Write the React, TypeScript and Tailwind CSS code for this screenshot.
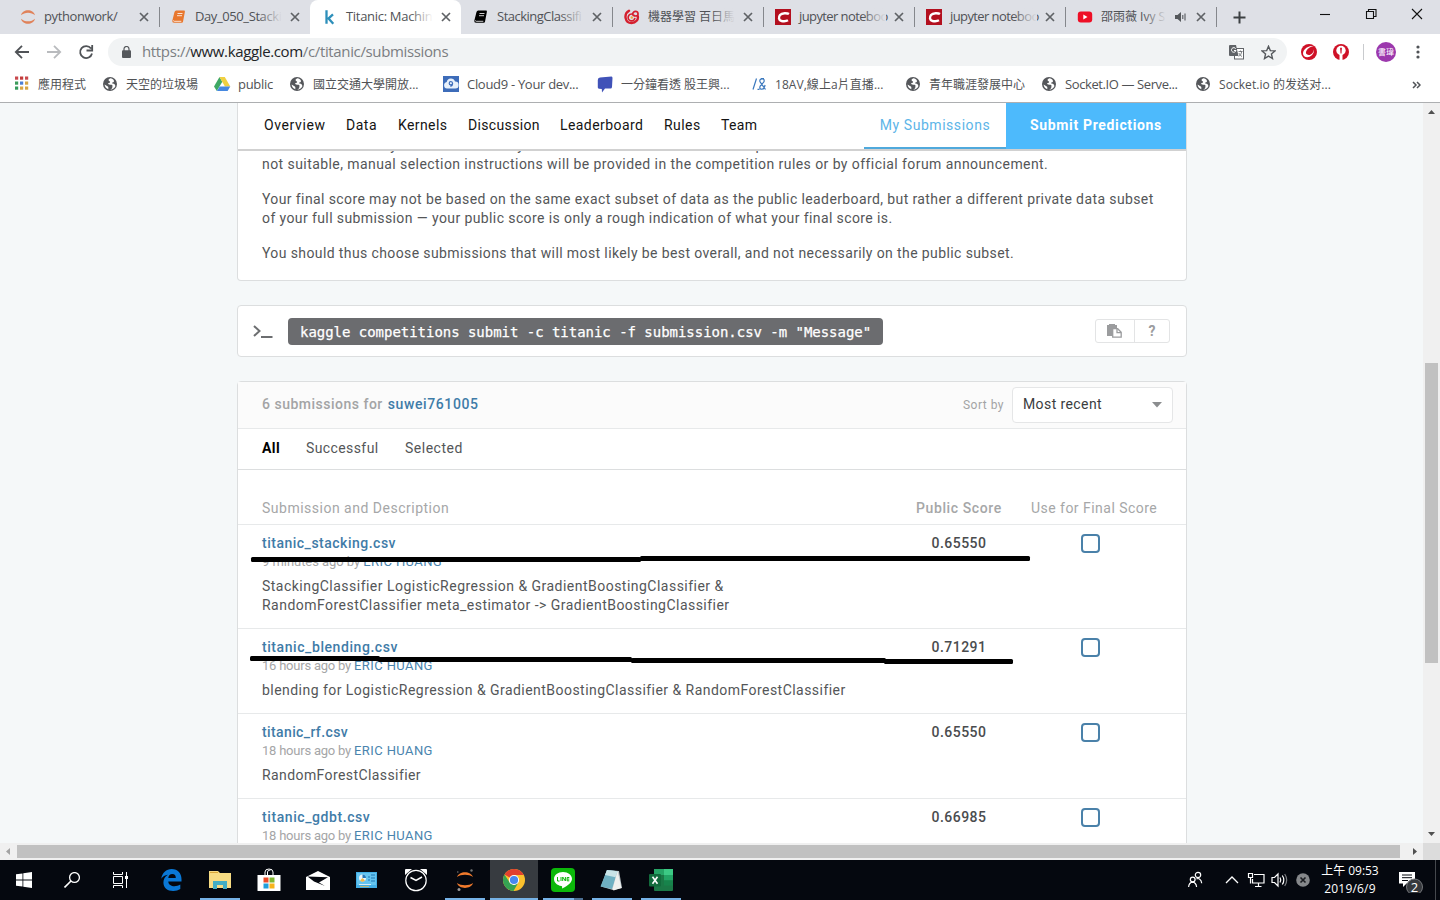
import React from "react";

const ui = "font-['Open_Sans','Noto_Sans_CJK_TC',sans-serif]";

/* ---------- small icons ---------- */

const Jupyter = ({ size = 16 }: { size?: number }) => (
  <svg width={size} height={size} viewBox="0 0 16 16" fill="none">
    <path d="M1 6.2C2.6 -0.4 13.400 -0.4 15 6.2C11.500 2.800 4.500 2.800 1 6.200Z" fill="#e0825a" />
    <path d="M1 9.800C2.600 16.400 13.400 16.400 15 9.800C11.500 13.200 4.500 13.200 1 9.800Z" fill="#e0825a" />
  </svg>
);

const Book = ({ color, line = "#fff" }: { color: string; line?: string }) => (
  <svg width="16" height="16" viewBox="0 0 16 16">
    <path d="M5.200 1.500H13q1.200 0 .9 1.200L12 12.700q-.2 1-1.200 1H3q-2 0-1.700-2L3.500 3q.4-1.500 1.700-1.500Z" fill={color} />
    <path d="M6.500 4.500h5M6 6.700h5" stroke={line} strokeWidth=".8" />
    <path d="M2.500 11.500q0 .8.8.8h7" stroke={line} strokeWidth=".8" fill="none" />
  </svg>
);

const Kaggle = () => (
  <svg width="16" height="16" viewBox="0 0 16 16" fill="none" stroke="#2d8fba" strokeWidth="2.300">
    <path d="M4.500 1.200V14.800M11 5.300L5.800 10.200M6.300 9.200L11.300 14.800" />
  </svg>
);

const Cupoy = () => (
  <svg width="16" height="16" viewBox="0 0 16 16" fill="none" stroke="#d5202f" strokeLinecap="round">
    <path d="M5 1.800C-.6 5 .8 14 7.500 14c4.500 0 7-3.500 6.300-6.800" strokeWidth="2.400" />
    <path d="M10.800 9.500A3.400 3.400 0 1 1 8.500 5.200C9.500 1.500 13.500 1.500 14 4.500S11 7.500 9 6" strokeWidth="1.700" />
    <circle cx="7.800" cy="8.500" r="1.200" fill="#f4a640" stroke="none" />
  </svg>
);

const CsdnC = () => (
  <svg width="16" height="16" viewBox="0 0 16 16">
    <rect width="16" height="16" fill="#b3101f" />
    <path d="M14 5C12.500 4 7 3.500 5 6C3.400 8 3.500 11.500 6.500 12c2.500.4 5 .2 6.500-.7" fill="none" stroke="#fff" strokeWidth="2.400" />
  </svg>
);

const YouTube = () => (
  <svg width="16" height="16" viewBox="0 0 16 16">
    <rect x=".8" y="2.500" width="14.400" height="11" rx="3" fill="#ee0f26" />
    <path d="M6.300 5.500v5l4.200-2.500z" fill="#fff" />
  </svg>
);

const Close = () => (
  <svg width="10" height="10" viewBox="0 0 10 10" stroke="#5f6266" strokeWidth="1.700">
    <path d="M1 1l8 8M9 1L1 9" />
  </svg>
);

const Globe = () => (
  <svg width="16" height="16" viewBox="0 0 16 16">
    <circle cx="7" cy="8" r="7" fill="#55575b" />
    <path d="M7.800 2.200C5 3 5.200 4.500 6.500 5.200C8 6 6.500 7 5.200 7.300C4.300 7.600 5.400 8.800 8 8.700c2 0 1.500 1.600 1.300 2.800c-.2 1-1 1.700-2 2.200c2.500.1 4.300-1.600 5.100-3.400c-.3-1.800-1.100-2.600-2.700-2.700c-1.400 0-.6-1.200.5-1.300c1-.1 1-1.700 0-2.700C9.500 2.900 8.700 2.300 7.800 2.200Z" fill="#fff" />
    <path d="M1.600 8.500l3.200 2c1 .6.300 1.500.600 2.800c-2.200-.7-3.700-2.500-3.800-4.800Z" fill="#fff" />
  </svg>
);

const Apps = () => (
  <svg width="16" height="16" viewBox="0 0 16 16">
    {["#c8484c", "#c33d3c", "#c8484c", "#3c9b5b", "#4b7fd6", "#d6a545", "#349a5a", "#d9a545", "#d6a545"].map((c, i) => (
      <rect key={i} x={(i % 3) * 5} y={0.5 + Math.floor(i / 3) * 5} width="3.200" height="3.200" fill={c} />
    ))}
  </svg>
);

const Drive = () => (
  <svg width="17" height="16" viewBox="0 0 17 16">
    <path d="M5.500 1L0 10.500L2.800 15L8.300 5.700Z" fill="#3fa864" />
    <path d="M5.500 1h5.300l5.500 9.500h-5.400Z" fill="#f0d040" />
    <path d="M5.700 10.500h10.600L13.600 15H2.900Z" fill="#4688e0" />
  </svg>
);

const Cloud9 = () => (
  <svg width="16" height="16" viewBox="0 0 16 16">
    <rect width="16" height="16" fill="#3d6cb9" />
    <path d="M4 12.500a3.300 3.300 0 0 1-.3-6.500a4.300 4.300 0 0 1 8.300-.4a3.400 3.400 0 0 1 .3 6.900Z" fill="#e8f1fb" />
    <path d="M9.600 7.300a1.700 1.700 0 1 1-1.700-1.800q1.700.1 1.700 2.200t-2.200 2.700" fill="none" stroke="#3d6cb9" strokeWidth="1.200" />
  </svg>
);

const Chat = () => (
  <svg width="16" height="17" viewBox="0 0 16 17">
    <path d="M3 1.500L14.500 0.500Q15.500.500 15.500 2L15 11q-.1 1.500-1.500 1.500H8L5 16.500L4.800 13L2 12.700Q.8 12.500.8 11.500L.8 4Q.8 1.700 3 1.500Z" fill="#4052b8" />
  </svg>
);

const Av = () => (
  <svg width="16" height="16" viewBox="0 0 16 16" fill="none" stroke="#3b78bd" strokeWidth="1.200">
    <path d="M1 13.500L4.500 2.500M13.500 13.500L8 5.800Q7.300 3 10 2.800t2 3L8.200 10Q7 12.800 9.500 13.200t3.600-4.200M7.500 13.400H5.500M9 2.500h3" />
  </svg>
);

/* ---------- browser window ---------- */

type TabProps = { icon: React.ReactNode; title: string; cls?: string; active?: boolean; sound?: boolean; sep?: boolean; fade?: boolean };

const Tab = ({ icon, title, cls = "", active, sound, sep, fade = true }: TabProps) => (
  <div className={`relative flex h-[34px] w-[151px] shrink-0 items-center pl-3 ${active ? "rounded-t-lg bg-white" : ""}`}>
    {sep && <span className="absolute left-0 top-[7px] h-5 w-px bg-[#85878c]" />}
    <span className="w-4 shrink-0">{icon}</span>
    <span className={`relative ml-2 shrink-0 whitespace-nowrap ${sound ? "w-[66px]" : "w-[87px]"}`}>
      <span className={cls}>{title}</span>
      {fade && <span className={`absolute inset-y-0 right-0 w-6 bg-gradient-to-r ${active ? "from-white/0 to-white" : "from-[#dee0e6]/0 to-[#dee0e6]"}`} />}
    </span>
    {sound && (
      <svg className="ml-2 shrink-0" width="12" height="12" viewBox="0 0 12 12" fill="none" stroke="#55585c">
        <path d="M0 4h2.500L6 1v10L2.500 8H0Z" fill="#55585c" stroke="none" />
        <path d="M7.800 4v4M10 2.500v7" strokeWidth="1.100" />
      </svg>
    )}
    <span className={sound ? "mb-px ml-[9px]" : "mb-px ml-2"}><Close /></span>
  </div>
);

const TabStrip = () => (
  <div className="flex h-[34px] bg-[#dee0e6] pl-2 text-[13px] text-[#505256]">
    <Tab fade={false} icon={<Jupyter />} title="pythonwork/" cls="tracking-[-0.4px]" />
    <Tab sep icon={<Book color="#e8772e" />} title="Day_050_Stacki" cls="tracking-[-0.4px]" />
    <Tab active icon={<Kaggle />} title="Titanic: Machin" cls="tracking-[-0.3px]" />
    <Tab icon={<Book color="#000" />} title="StackingClassifi" cls="tracking-[-0.5px]" />
    <Tab sep icon={<Cupoy />} title="機器學習 百日馬" cls="text-[12px]" />
    <Tab sep icon={<CsdnC />} title="jupyter noteboo" cls="tracking-[-0.6px]" />
    <Tab sep icon={<CsdnC />} title="jupyter noteboo" cls="tracking-[-0.6px]" />
    <Tab sep sound icon={<YouTube />} title="邵雨薇 Ivy S" cls="text-[12px]" />
    <div className="flex flex-1 items-center">
      <span className="-mt-px h-5 w-px bg-[#85878c]" />
      <svg className="ml-4" width="13" height="13" viewBox="0 0 13 13" stroke="#3c4043" strokeWidth="2">
        <path d="M6.500 0.500v12M.5 6.500h12" />
      </svg>
      <svg className="-mt-[7px] ml-[74px]" width="110" height="14" viewBox="0 0 110 14" fill="none" stroke="#111" strokeWidth="1.100">
        <path d="M0 7.500h10" />
        <path d="M46.500 4.500h7v7h-7zM48.500 4.500v-2h7.500v7h-2.500" />
        <path d="M92 2l10 10M102 2L92 12" />
      </svg>
    </div>
  </div>
);

const Toolbar = () => (
  <div className="flex h-[34px] items-center bg-white pl-[14px]">
    <svg width="84" height="16" viewBox="0 0 84 16" fill="none" strokeWidth="1.800" className="mt-0.5">
      <path d="M15 8H2M8 1.800L1.800 8L8 14.200" stroke="#505357" />
      <path d="M33 8h13M40 1.800L46.200 8L40 14.200" stroke="#b9bbbe" />
      <path d="M77 4.500A6 6 0 1 0 78 9.500M78.200 1v5.500H72.500" stroke="#505357" />
    </svg>
    <div className="ml-[10px] mt-0.5 flex h-7 w-[1179px] items-center rounded-full bg-[#f1f3f4] pl-[14px]">
      <svg width="9" height="12" viewBox="0 0 9 12">
        <rect y="4.200" width="9" height="7.800" rx="1" fill="#55585c" />
        <path d="M2 5V3a2.500 2.500 0 0 1 5 0v2" stroke="#55585c" strokeWidth="1.200" fill="none" />
      </svg>
      <span className="-mt-0.5 ml-[11px] whitespace-nowrap text-[15px] tracking-[-0.36px] text-[#7b7e82]">
        https://<span className="text-[#222427]">www.kaggle.com</span>/c/titanic/submissions
      </span>
      <svg className="ml-auto" width="15" height="15" viewBox="0 0 15 15">
        <rect x="5.500" y="3.500" width="9" height="10.500" fill="#fff" stroke="#606367" />
        <path d="M0 1q0-1 1-1h6l2.500 11H1q-1 0-1-1Z" fill="#606367" />
        <path d="M6.700 3.700A2.300 2.300 0 1 0 7 5.500H5" stroke="#fff" fill="none" />
        <path d="M9.500 6.500h4M11.500 5.500v1M9.800 11.500q2.500-1.700 3-5M9.800 8q1.500 3 3.200 3.500" stroke="#606367" strokeWidth=".8" fill="none" />
      </svg>
      <svg className="ml-[17px] mr-[11px]" width="15" height="15" viewBox="0 0 24 24" fill="none" stroke="#55585c" strokeWidth="2.200">
        <path d="M12 2l2.900 6.900 7.400.6-5.600 4.900 1.700 7.300L12 17.800l-6.400 3.900 1.700-7.300L1.700 9.500l7.400-.6Z" />
      </svg>
    </div>
    <svg className="ml-[14px] mt-0.5" width="16" height="16" viewBox="0 0 16 16">
      <circle cx="8" cy="8" r="8" fill="#cf1127" />
      <path d="M13.500 1.800C8 1.500 2.200 4.500 2 9.300C1.900 13.500 7.500 14.500 10.800 11.300C12.500 9.600 13.200 7.500 13 5.500C12.500 8.500 10.500 11 7.800 11C5.200 11 4.300 9 5.300 7.100C6.800 4.200 10 2.500 13.500 1.800Z" fill="#fff" />
    </svg>
    <svg className="ml-4 mt-0.5" width="16" height="16" viewBox="0 0 16 16">
      <circle cx="8" cy="8" r="8" fill="#cf1127" />
      <circle cx="8" cy="6.500" r="4.700" fill="#fff" />
      <path d="M6.500 10h3v6h-3z" fill="#fff" />
      <path d="M7.500 9.500l-.2-3.500L7 4.500L8 3.200l1 1.300L8.700 6L8.500 9.500Z" fill="#cf1127" />
    </svg>
    <span className="ml-[14px] mt-0.5 h-4 w-px bg-[#c9cbce]" />
    <span className="ml-3 mt-0.5 flex h-5 w-5 items-center justify-center whitespace-nowrap rounded-full bg-[#9c38ad] text-[8px] leading-none text-white">書瑋</span>
    <svg className="ml-[20px] mt-0.5" width="4" height="14" viewBox="0 0 4 14" fill="#505357">
      <circle cx="2" cy="2" r="1.600" /><circle cx="2" cy="7" r="1.600" /><circle cx="2" cy="12" r="1.600" />
    </svg>
  </div>
);

const Bookmark = ({ icon, text, w, cls = "" }: { icon: React.ReactNode; text: string; w: string; cls?: string }) => (
  <div className={`flex shrink-0 items-center ${w}`}>
    <span className="-mt-px w-[23px] shrink-0">{icon}</span>
    <span className={`whitespace-nowrap ${cls}`}>{text}</span>
  </div>
);

const Bookmarks = () => (
  <div className="flex h-[35px] items-center border-b border-[#adafb1] bg-white pb-px pl-[15px] text-[12px] text-[#505255]">
    <Bookmark w="w-[88px]" icon={<Apps />} text="應用程式" />
    <Bookmark w="w-[111px]" icon={<Globe />} text="天空的垃圾場" />
    <Bookmark w="w-[76px]" icon={<Drive />} text="public" cls="text-[13px] pl-px tracking-[-0.3px]" />
    <Bookmark w="w-[153px]" icon={<Globe />} text="國立交通大學開放..." />
    <Bookmark w="w-[154px]" icon={<Cloud9 />} text="Cloud9 - Your dev..." cls="text-[13px] pl-px tracking-[-0.3px]" />
    <Bookmark w="w-[155px]" icon={<Chat />} text="一分鐘看透 股王興..." cls="pl-px" />
    <Bookmark w="w-[154px]" icon={<Av />} text="18AV,線上a片直播..." cls="tracking-[0.06px]" />
    <Bookmark w="w-[136px]" icon={<Globe />} text="青年職涯發展中心" />
    <Bookmark w="w-[154px]" icon={<Globe />} text="Socket.IO — Serve..." cls="text-[13px] tracking-[-0.4px]" />
    <Bookmark w="w-[216px]" icon={<Globe />} text="Socket.io 的发送对..." cls="tracking-[0.06px]" />
    <svg width="9" height="8" viewBox="0 0 9 8" fill="none" stroke="#505357" strokeWidth="1.500">
      <path d="M1 1l3 3-3 3M5 1l3 3-3 3" />
    </svg>
  </div>
);

/* ---------- page ---------- */

const NavItem = ({ w, cls, text }: { w: string; cls: string; text: string }) => (
  <span className={`shrink-0 whitespace-nowrap ${w} ${cls}`}>{text}</span>
);

const PageNav = () => (
  <div className="flex h-12 shrink-0 items-stretch border-b-2 border-[#d1d1d1] text-[14px] leading-[44px] text-[#141414]">
    <div className="flex pl-[26px]">
      <NavItem w="w-[82px]" cls="tracking-[0.6px]" text="Overview" />
      <NavItem w="w-[52px]" cls="tracking-[0.5px]" text="Data" />
      <NavItem w="w-[70px]" cls="tracking-[0.4px]" text="Kernels" />
      <NavItem w="w-[92px]" cls="tracking-[0.35px]" text="Discussion" />
      <NavItem w="w-[104px]" cls="tracking-[0.43px]" text="Leaderboard" />
      <NavItem w="w-[57px]" cls="tracking-[0.45px]" text="Rules" />
      <NavItem w="w-[60px]" cls="tracking-[0.35px]" text="Team" />
    </div>
    <div className="ml-auto w-[142px] border-b-2 border-[#4fa9dc] text-center tracking-[0.55px] text-[#5cb5e8]">My Submissions</div>
    <div className="w-[180px] bg-[#4dbafc] text-center font-bold tracking-[0.65px] text-white">Submit Predictions</div>
  </div>
);

type RowProps = { name: string; nameCls: string; ago: string; agoCls?: string; desc: { t: string; c: string }[]; score: string; h: string };

const Row = ({ name, nameCls, ago, agoCls = "tracking-[-0.22px]", desc, score, h }: RowProps) => (
  <div className={`flex shrink-0 border-b border-[#e7e9ea] pl-6 pt-[9px] ${h}`}>
    <div className="w-[630px]">
      <div className={`font-medium leading-[19px] text-[#3f7ca8] ${nameCls}`}>{name}</div>
      <div className="text-[13px] leading-[17px] text-[#a5a6a7]">
        <span className={agoCls}>{ago} by </span><span className="tracking-[0.4px] text-[#4a84ae]">ERIC HUANG</span>
      </div>
      <div className="mt-[7px] leading-[19px]">
        {desc.map((d) => <div key={d.t} className={`whitespace-nowrap ${d.c}`}>{d.t}</div>)}
      </div>
    </div>
    <div className="w-[134px] text-center font-medium leading-[19px] tracking-[0.45px] text-[#4a4c4e]">{score}</div>
    <div className="ml-[55px] h-[19px] w-[19px] rounded-[4px] border-2 border-[#4a81a9]" />
  </div>
);

const Page = () => (
  <div className="relative flex h-full w-[1423px] flex-col overflow-hidden bg-[#f5f8f9] pl-[237px] font-['Roboto',sans-serif] text-[14px] text-[#545658]">
    <div className="flex h-[178px] w-[950px] shrink-0 flex-col rounded-b-[4px] border border-t-0 border-[#dcdedf] bg-white">
      <PageNav />
      <div className="flex min-h-0 flex-1 flex-col justify-end overflow-hidden pb-[17px] pl-6 leading-[19px]">
        <p className="whitespace-nowrap tracking-[0.4px]">will be automatically chosen based on your best submission scores on the public leaderboard. In the event that automatic selection is</p>
        <p className="whitespace-nowrap tracking-[0.43px]">not suitable, manual selection instructions will be provided in the competition rules or by official forum announcement.</p>
        <p className="mt-4 whitespace-nowrap tracking-[0.393px]">Your final score may not be based on the same exact subset of data as the public leaderboard, but rather a different private data subset</p>
        <p className="whitespace-nowrap tracking-[0.4px]">of your full submission — your public score is only a rough indication of what your final score is.</p>
        <p className="mt-4 whitespace-nowrap tracking-[0.39px]">You should thus choose submissions that will most likely be best overall, and not necessarily on the public subset.</p>
      </div>
    </div>

    <div className="mt-6 flex h-[52px] w-[950px] shrink-0 items-center rounded-[4px] border border-[#dcdedf] bg-white pl-[15px] pr-4">
      <svg width="20" height="16" viewBox="0 0 20 16" fill="none" stroke="#6c6e70" strokeWidth="2">
        <path d="M1 3l5.500 5L1 13M8 14h11.500" />
      </svg>
      <code className="ml-[15px] h-[27px] w-[595px] whitespace-nowrap rounded-[4px] bg-[#6b6c6f] pl-3 font-['DejaVu_Sans_Mono',monospace] text-[14px] leading-[28px] tracking-[-0.03px] text-white [-webkit-text-stroke:0.25px_#fff]">
        kaggle competitions submit -c titanic -f submission.csv -m "Message"
      </code>
      <div className="ml-auto flex h-6 w-[75px] rounded-[3px] border border-[#e3e4e5] text-[#9b9c9e]">
        <div className="flex w-[39px] items-center justify-center border-r border-[#e3e4e5]">
          <svg className="-ml-px" width="15" height="14" viewBox="0 0 15 14">
            <path d="M0 1h2V0h6v1h2v3H6v8H0Z" fill="#9b9c9e" />
            <path d="M5.700 4.700h5l3.500 3.500v5h-8.500Z" fill="#fff" stroke="#9b9c9e" strokeWidth="1.300" />
            <path d="M10 4.700v4h4" fill="none" stroke="#9b9c9e" strokeWidth="1.300" />
          </svg>
        </div>
        <div className="flex flex-1 items-center justify-center font-bold">?</div>
      </div>
    </div>

    <div className="mt-6 flex h-[600px] w-[950px] shrink-0 flex-col rounded-t-[4px] border border-[#dcdedf] bg-white">
      <div className="flex h-[47px] shrink-0 items-center border-b border-[#e7e9ea] bg-[#fbfbfb] pl-6 pr-[13px]">
        <span className="-mt-0.5 font-medium tracking-[0.5px] text-[#a3a4a5]">6 submissions for</span>
        <span className="-mt-0.5 ml-[5px] font-medium tracking-[0.6px] text-[#3f7ca8]">suwei761005</span>
        <span className="ml-auto text-[12px] tracking-[0.5px] text-[#a3a4a5]">Sort by</span>
        <div className="ml-2 flex h-9 w-[161px] items-center rounded-[4px] border border-[#e5e6e7] bg-white pl-[10px] pr-[10px] text-[#3a3c3e]">
          <span className="-mt-0.5 tracking-[0.4px]">Most recent</span>
          <svg className="ml-auto" width="10" height="6" viewBox="0 0 10 6" fill="#8b8d8f"><path d="M0 0h10L5 5.500z" /></svg>
        </div>
      </div>
      <div className="flex h-[41px] shrink-0 border-b border-[#dcdedf] pl-6 leading-[38px]">
        <span className="w-11 font-bold tracking-[0.4px] text-black">All</span>
        <span className="w-[99px] tracking-[0.4px]">Successful</span>
        <span className="tracking-[0.5px]">Selected</span>
      </div>
      <div className="flex h-[55px] shrink-0 items-end border-b border-[#e7e9ea] pb-[6px] pl-6 leading-[19px] text-[#a6a7a8]">
        <span className="w-[654px] tracking-[0.5px]">Submission and Description</span>
        <span className="w-[115px] font-medium tracking-[0.6px]">Public Score</span>
        <span className="whitespace-nowrap tracking-[0.47px]">Use for Final Score</span>
      </div>
      <Row h="h-[104px]" name="titanic_stacking.csv" nameCls="tracking-[0.5px]" ago="9 minutes ago" agoCls="tracking-[-0.05px]" score="0.65550" desc={[
        { t: "StackingClassifier LogisticRegression & GradientBoostingClassifier &", c: "tracking-[0.48px]" },
        { t: "RandomForestClassifier meta_estimator -> GradientBoostingClassifier", c: "tracking-[0.47px]" },
      ]} />
      <Row h="h-[85px]" name="titanic_blending.csv" nameCls="tracking-[0.57px]" ago="16 hours ago" score="0.71291" desc={[
        { t: "blending for LogisticRegression & GradientBoostingClassifier & RandomForestClassifier", c: "tracking-[0.46px]" },
      ]} />
      <Row h="h-[85px]" name="titanic_rf.csv" nameCls="tracking-[0.38px]" ago="18 hours ago" score="0.65550" desc={[{ t: "RandomForestClassifier", c: "tracking-[0.41px]" }]} />
      <Row h="h-[85px]" name="titanic_gdbt.csv" nameCls="tracking-[0.58px]" ago="18 hours ago" score="0.66985" desc={[]} />
    </div>

    <svg className="absolute left-[250px] top-[453px]" width="782" height="110" viewBox="0 0 782 110" fill="#000">
      <rect x="1" y="1" width="390" height="5" rx="1.500" />
      <rect x="390" y="0" width="390" height="5" rx="1.500" />
      <rect x="0" y="100" width="130" height="5" rx="1.500" />
      <rect x="128" y="101" width="254" height="5" rx="1.500" />
      <rect x="381" y="102" width="255" height="5" rx="1.500" />
      <rect x="634" y="103" width="129" height="5" rx="1.500" />
    </svg>
  </div>
);

/* ---------- taskbar ---------- */

const Task = ({ children, on, active, w = "w-[49px]" }: { children: React.ReactNode; on?: boolean; active?: boolean; w?: string }) => (
  <div className={`relative flex h-10 shrink-0 items-center justify-center ${w}`}>
    {active && <span className="absolute inset-y-0 left-0 w-12 bg-[#373b40]" />}
    <span className="relative mr-[2px]">{children}</span>
    {(on || active) && <span className={`absolute bottom-0 h-0.5 bg-[#76b2e6] ${active ? "left-0 w-12" : "left-1 w-10"}`} />}
  </div>
);

const Taskbar = () => (
  <div className="flex h-10 items-center bg-[#05080f] text-white">
    <Task w="w-[50px]">
      <svg width="16" height="16" viewBox="0 0 16 16" fill="#fff"><path d="M0 2.300L6.500 1.400V7.600H0ZM7.300 1.300L16 0v7.600H7.300ZM0 8.400h6.500v6.200L0 13.700ZM7.300 8.400H16V16l-8.700-1.300Z" /></svg>
    </Task>
    <Task w="w-[46px]">
      <svg width="16" height="16" viewBox="0 0 16 16" fill="none" stroke="#fff" strokeWidth="1.300"><circle cx="10.500" cy="5.500" r="4.900" /><path d="M7 9L.5 15.500" strokeWidth="1.600" /></svg>
    </Task>
    <Task w="w-[50px]">
      <svg width="17" height="16" viewBox="0 0 17 16" fill="none" stroke="#fff"><path d="M1.500 0v2.500h9V0M1.500 16v-2.500h9V16M1.500 4.500h9v7h-9zM14.500 0v16" /><rect x="13.500" y="4.500" width="2" height="2" fill="#fff" /></svg>
    </Task>
    <Task w="w-[50px]">
      <svg className="ml-[2px]" width="21" height="22" viewBox="0 0 21 22" fill="#0a78d6"><path d="M.3 9.700C1.200 3.800 5.200 0 10.700 0C17 0 20.500 4.700 20.500 10v2.500H7.300c.2 3.300 3 4.700 6 4.700c2.300 0 4.200-.5 6-1.600v4.500C17.300 21.300 15 22 12.200 22C6.200 22 2.400 18.700 2.400 13.500c0-3.300 1.600-6.200 4.500-7.800C3.900 6.200 1.700 7.500.3 9.700ZM7.300 8.900h7.500c0-2.300-1-3.900-3.500-3.900C9 5 7.600 6.500 7.300 8.900Z" fillRule="evenodd" /></svg>
    </Task>
    <Task on>
      <svg width="22" height="18" viewBox="0 0 22 18"><path d="M0 0h9l2 2h11v15H0Z" fill="#f7dc83" /><path d="M1 1.500h8" stroke="#d9a739" strokeWidth="1" /><path d="M4 18v-8h14v8h-4v-4H8v4Z" fill="#42aec4" /></svg>
    </Task>
    <Task>
      <svg width="24" height="24" viewBox="0 0 24 24"><path d="M8 7V4q0-3 4-3t4 3v3M10.500 7V4q0-2 3-2" fill="none" stroke="#fff" /><path d="M.5 7h23v15.500q0 .5-.5.5H1q-.5 0-.5-.5Z" fill="#fff" /><path d="M6.500 9.500h5v5h-5z" fill="#ea4b28" /><path d="M12.500 9.500h5v5h-5z" fill="#7fb72f" /><path d="M6.500 15.500h5v5h-5z" fill="#1f9fdc" /><path d="M12.500 15.500h5v5h-5z" fill="#f6b31b" /></svg>
    </Task>
    <Task>
      <svg width="24" height="19" viewBox="0 0 24 19"><path d="M12 0l12 6v13H0V6Z" fill="#fff" /><path d="M1.500 5.500L22 6.200L13 11.500L19 15L8 10.500Z" fill="#05080f" /></svg>
    </Task>
    <Task>
      <svg width="21" height="16" viewBox="0 0 21 16"><rect width="21" height="16" fill="#43aee6" /><rect x="1" y="1" width="19" height="12" fill="#65c4ef" /><circle cx="6.500" cy="6" r="3.500" fill="#e9f5fb" /><path d="M6.500 6V2.500A3.500 3.500 0 0 1 10 6Z" fill="#2476b8" /><path d="M6.500 6l2.500 2.500A3.500 3.500 0 0 1 4 8.500Z" fill="#f0b84b" /><path d="M12 8h2M12 5h2M15 3h4M15 6h4M15 9h4" stroke="#1f76b4" /><path d="M3 12.500h12" stroke="#d8effa" /><path d="M4 14.500h9" stroke="#b9b87b" /></svg>
    </Task>
    <Task>
      <svg width="22" height="24" viewBox="0 0 22 24"><path d="M0 7V2q0-1 1-1h6ZM22 7V2q0-1-1-1h-6Z" fill="#fff" /><circle cx="11" cy="12.500" r="10.200" fill="#05080f" stroke="#fff" strokeWidth="1.200" /><path d="M5.500 9.500l5.500 3l6-3.500" fill="none" stroke="#fff" strokeWidth="1.500" /></svg>
    </Task>
    <Task on>
      <svg width="18" height="24" viewBox="0 0 18 24"><path d="M1 9C3 2.500 15 2.500 17 9C13 6 5 6 1 9ZM1 15C3 21.500 15 21.500 17 15C13 18 5 18 1 15Z" fill="#f07a2c" /><circle cx="15.500" cy="2.500" r="1.200" fill="#777" /><circle cx="3" cy="21.500" r="1.500" fill="#999" /><circle cx="1.800" cy="4" r=".8" fill="#777" /></svg>
    </Task>
    <Task active>
      <svg width="22" height="22" viewBox="0 0 22 22"><circle cx="11" cy="11" r="11" fill="#fbc02d" /><path d="M11 11L1.470 5.500A11 11 0 0 1 20.530 5.500L20.700 6H11Z" fill="#e0402f" /><path d="M1.470 5.500A11 11 0 0 0 10.500 22L15.400 13.500L11 16L6.700 13.500Z" fill="#35a353" /><circle cx="11" cy="11" r="5.100" fill="#fff" /><circle cx="11" cy="11" r="4.100" fill="#4688f1" /></svg>
    </Task>
    <div className="relative flex h-10 w-[49px] items-center justify-center pr-[2px]">
      <svg width="24" height="24" viewBox="0 0 24 24"><rect width="24" height="24" rx="4" fill="#0cb80a" /><path d="M12 4C7 4 3 7 3 11c0 3.600 3 6.300 7.300 7c1.200.2.900 1 .7 2.500c2.500-1 10-5.200 10-9.500C21 7 17 4 12 4Z" fill="#fff" /><path d="M6.500 9v4h2M10 9v4M11.700 13V9l2.700 4V9M18.300 9.500h-2.200v3.300h2.200M16.300 11.100h2" fill="none" stroke="#0cb80a" strokeWidth="1" /></svg>
      <span className="absolute bottom-0 left-1 h-0.5 w-[31px] bg-[#76b2e6]" />
      <span className="absolute bottom-0 left-[35px] h-0.5 w-[9px] bg-[#4c6f93]" />
    </div>
    <Task on>
      <svg width="23" height="22" viewBox="0 0 23 22"><path d="M7 1l12 1l3 17l-9 2L1 17.500Z" fill="#b9c3c8" /><path d="M7 1l10.500 1.200L12 20L.5 17.500Z" fill="#6fb0c2" /><path d="M7 1l10.500 1.200l-2 6L5 6Z" fill="#c9e4e8" /><path d="M17.500 2l4 17l-8 2.500l-1-1.500Z" fill="#eff0ee" /></svg>
    </Task>
    <Task on>
      <svg width="24" height="22" viewBox="0 0 24 22"><rect x="5" width="19" height="22" rx="1" fill="#1b7846" /><rect x="5" width="10" height="6" fill="#26a566" /><rect x="15" width="9" height="6" fill="#3cc984" /><rect x="15" y="6" width="9" height="5.500" fill="#23a364" /><rect x="15" y="11.500" width="9" height="5" fill="#17834b" /><rect y="5" width="12" height="12.500" rx="1" fill="#126b3c" /><path d="M3.500 7.800l5 7M8.500 7.800l-5 7" stroke="#fff" strokeWidth="1.600" /></svg>
    </Task>
    <div className="ml-auto flex h-10 items-center">
      <svg width="122" height="18" viewBox="0 0 122 18" fill="none" stroke="#fff" strokeWidth="1.200">
        <circle cx="4.700" cy="8.500" r="2.400" /><path d="M.6 16q.4-4.500 4-4.800q3.400.3 4 4.800" />
        <circle cx="10" cy="4" r="2.700" /><path d="M8.500 8q1.500-1 3 0q2 1.300 2.200 4.300" />
        <path d="M38 12l6-6l6 6" strokeWidth="1.300" />
        <path d="M66 3.500h10v8.500H64.500v-4M67 15.500h6.500M70.500 12v3.500M60.500 2.500h4v4h-4zM62.500 6.500v6" />
        <path d="M84 6.500h2.500l3.500-3.500v12l-3.500-3.500H84ZM92 6.500q1.500 2.500 0 5M94.300 4.500q3 4.500 0 9" />
        <path d="M96.700 3q4 6 0 12" stroke="#7b7d81" />
        <circle cx="115" cy="9" r="6.800" fill="#85878a" stroke="none" /><path d="M112.500 6.500l5 5M117.500 6.500l-5 5" stroke="#1a1c20" strokeWidth="1.600" />
      </svg>
      <div className="ml-2 w-16 text-center text-[12px] leading-[18px]">
        <div className="whitespace-nowrap tracking-[-0.05px]">上午 09:53</div>
        <div className="tracking-[0.2px]">2019/6/9</div>
      </div>
      <svg className="ml-[17px] mr-[10px]" width="26" height="26" viewBox="0 0 26 26">
        <path d="M0 5h16v11.500h-8.500L4 20v-3.500H0Z" fill="#fff" /><path d="M3 8h10M3 10.700h10M3 13.500h6" stroke="#05080f" />
        <circle cx="15.500" cy="17.500" r="8" fill="#36393d" stroke="#75777b" transform="translate(0 2.5)" />
        <text x="15.500" y="24.500" textAnchor="middle" fontSize="13" fill="#fff">2</text>
      </svg>
      <span className="mr-[4px] h-10 w-px bg-[#45484d]" />
    </div>
  </div>
);

export default function App() {
  return (
    <div className={`flex h-[900px] w-[1440px] flex-col overflow-hidden bg-white ${ui}`}>
      <TabStrip />
      <Toolbar />
      <Bookmarks />
      <div className="flex h-[740px] shrink-0">
        <Page />
        <div className="flex w-[17px] flex-col items-center bg-[#f0f0f0]">
          <svg className="mt-[7px]" width="7" height="4" viewBox="0 0 7 4" fill="#505050"><path d="M3.500 0L7 4H0Z" /></svg>
          <div className="mt-[249px] h-[300px] w-[13px] bg-[#c1c1c1]" />
          <svg className="mb-[7px] mt-auto" width="7" height="4" viewBox="0 0 7 4" fill="#505050"><path d="M0 0h7L3.500 4Z" /></svg>
        </div>
      </div>
      <div className="flex h-[17px] shrink-0 items-center bg-[#f0f0f0]">
        <svg className="ml-1.5" width="4" height="7" viewBox="0 0 4 7" fill="#a3a3a3"><path d="M4 0v7L0 3.500Z" /></svg>
        <div className="ml-[7px] h-[13px] w-[1383px] bg-[#c1c1c1]" />
        <svg className="ml-[13px]" width="4" height="7" viewBox="0 0 4 7" fill="#505050"><path d="M0 0v7L4 3.500Z" /></svg>
        <div className="ml-auto h-full w-[17px] bg-[#dcdcdc]" />
      </div>
      <Taskbar />
    </div>
  );
}
